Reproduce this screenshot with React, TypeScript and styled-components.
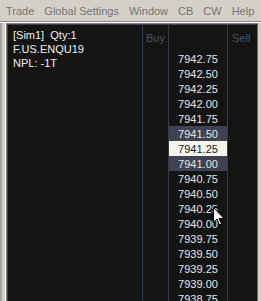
import React from 'react';
import styled, { createGlobalStyle } from 'styled-components';

const GlobalStyle = createGlobalStyle`
  html, body {
    margin: 0;
    padding: 0;
    background: #d4d0c8;
  }
  * {
    box-sizing: border-box;
  }
`;

const Page = styled.div`
  position: relative;
  width: 261px;
  height: 301px;
  overflow: hidden;
  background: #d4d0c8;
  display: flex;
  flex-direction: column;
  font-family: "Liberation Sans", Arial, sans-serif;
  font-size: 11px;
`;

const MenuBar = styled.div`
  height: 23px;
  display: flex;
  padding: 5px 0 0 1px;
  border-bottom: 1px solid #ffffff;
  box-shadow: inset 0 -1px 0 #8a8a8a;
  background: #d4d0c8;
`;

const MenuItem = styled.span`
  padding: 0 5px;
  line-height: 13px;
  color: #747474;
  white-space: nowrap;
`;

const Shell = styled.div`
  flex: 1;
  display: flex;
  border-left: 2px solid #a4a4a4;
  padding-left: 3px;
  padding-right: 3px;
  min-height: 0;
`;

const Bevel = styled.div<{ $color: string; $top?: boolean }>`
  flex: 1;
  display: flex;
  border-left: 1px solid ${p => p.$color};
  border-top: ${p => (p.$top ? `1px solid ${p.$color}` : 'none')};
  min-height: 0;
`;

const Panel = styled.div`
  flex: 1;
  display: flex;
  background: #141414;
  border-right: 1px solid #6a7090;
  min-height: 0;
`;

const Column = styled.div<{ $width: number; $divider?: boolean }>`
  width: ${p => p.$width}px;
  flex: none;
  border-right: ${p => (p.$divider ? '1px solid #363a4a' : 'none')};
  display: flex;
  flex-direction: column;
`;

const InfoText = styled.div`
  padding: 3px 5px 0;
  line-height: 14px;
  color: #f0f0f0;
  white-space: pre;
`;

const Header = styled.div<{ $pad: number }>`
  height: 26px;
  flex: none;
  padding: 6px 0 0 ${p => p.$pad}px;
  line-height: 14px;
  color: #4c5268;
`;

const PriceRow = styled.div<{ $tone: 'none' | 'dim' | 'bright' }>`
  height: 15px;
  flex: none;
  padding-top: 2px;
  line-height: 13px;
  text-align: center;
  background: ${p =>
    p.$tone === 'bright' ? '#f5f5ee' : p.$tone === 'dim' ? '#3f4252' : 'transparent'};
  color: ${p => (p.$tone === 'bright' ? '#18182a' : '#e6e6e6')};
`;

const Cursor = styled.svg`
  position: absolute;
  left: 213px;
  top: 207px;
`;

const menu = ['Trade', 'Global Settings', 'Window', 'CB', 'CW', 'Help'];

const prices: string[] = [];
for (let i = 0; i < 17; i++) {
  prices.push((7942.75 - i * 0.25).toFixed(2));
}

const toneFor = (price: string): 'none' | 'dim' | 'bright' => {
  if (price === '7941.25') return 'bright';
  if (price === '7941.50' || price === '7941.00') return 'dim';
  return 'none';
};

const App: React.FC = () => {
  return (
    <Page>
      <GlobalStyle />
      <MenuBar>
        {menu.map(m => (
          <MenuItem key={m}>{m}</MenuItem>
        ))}
      </MenuBar>
      <Shell>
        <Bevel $color="#ffffff">
          <Bevel $color="#808080" $top>
            <Bevel $color="#404040" $top>
              <Panel>
                <Column $width={135} $divider>
                  <InfoText>{'[Sim1]  Qty:1\nF.US.ENQU19\nNPL: -1T'}</InfoText>
                </Column>
                <Column $width={26} $divider>
                  <Header $pad={3}>Buy</Header>
                </Column>
                <Column $width={59} $divider>
                  <Header $pad={0} />
                  {prices.map(p => (
                    <PriceRow key={p} $tone={toneFor(p)}>
                      {p}
                    </PriceRow>
                  ))}
                </Column>
                <Column $width={26}>
                  <Header $pad={4}>Sell</Header>
                </Column>
              </Panel>
            </Bevel>
          </Bevel>
        </Bevel>
      </Shell>
      <Cursor width="12" height="19" viewBox="0 0 12 19">
        <path
          d="M0.5 0.5 L0.5 15.5 L4 12 L6.5 18 L8.5 17 L6 11.5 L11 11.5 Z"
          fill="#ffffff"
          stroke="#000000"
          strokeWidth="1"
        />
      </Cursor>
    </Page>
  );
};

export default App;
